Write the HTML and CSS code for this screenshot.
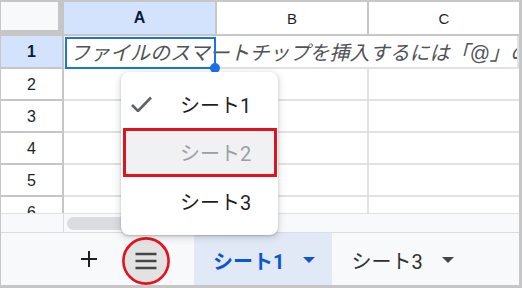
FILE: index.html
```html
<!DOCTYPE html>
<html lang="ja">
<head>
<meta charset="utf-8">
<link rel="stylesheet" href="styles.css">
</head>
<body>
<div class="frame">
  <div class="grid">
    <div class="corner"></div>
    <div class="colhead sel">A</div>
    <div class="colhead">B</div>
    <div class="colhead last">C</div>

    <div class="rowhead sel">1</div>
    <div class="cell span3"><span class="celltext">ファイルのスマートチップを挿入するには「@」の</span></div>

    <div class="rowhead">2</div><div class="cell"></div><div class="cell"></div><div class="cell last"></div>
    <div class="rowhead">3</div><div class="cell"></div><div class="cell"></div><div class="cell last"></div>
    <div class="rowhead">4</div><div class="cell"></div><div class="cell"></div><div class="cell last"></div>
    <div class="rowhead">5</div><div class="cell"></div><div class="cell"></div><div class="cell last"></div>
    <div class="rowhead">6</div><div class="cell"></div><div class="cell"></div><div class="cell last"></div>
  </div>

  <div class="scrollrow">
    <div class="scrollcorner"></div>
    <div class="scrolltrack"><div class="thumb"></div></div>
  </div>

  <div class="tabbar">
    <div class="iconbtn plus">
      <svg width="16" height="16" viewBox="0 0 16 16"><path d="M8 0v16M0 8h16" stroke="#1f1f1f" stroke-width="2"/></svg>
    </div>
    <div class="iconbtn menubtn">
      <svg width="48" height="48" viewBox="0 0 48 48">
        <circle cx="24" cy="24" r="22.6" fill="#e2e2e2" stroke="#e3131d" stroke-width="2.6"/>
        <path d="M13.5 17h21M13.5 24h21M13.5 31h21" stroke="#444746" stroke-width="2.4"/>
      </svg>
    </div>
    <div class="tab active"><span>シート1</span><i class="caret"></i></div>
    <div class="tab"><span>シート3</span><i class="caret"></i></div>
  </div>

  <div class="selection"><div class="handle"></div></div>

  <div class="popup">
    <div class="item">
      <span class="check">
        <svg width="21" height="16" viewBox="0 0 21 16"><path d="M1 9l6 6L20 1.5" fill="none" stroke="#5f6368" stroke-width="2.6"/></svg>
      </span>
      <span>シート1</span>
    </div>
    <div class="item disabled"><span class="check"></span><span>シート2</span></div>
    <div class="item"><span class="check"></span><span>シート3</span></div>
  </div>
</div>
</body>
</html>
```
FILE: styles.css
```css
html, body {
  margin: 0;
  padding: 0;
  background: #fff;
}
body {
  font-family: "Liberation Sans", "Noto Sans CJK JP", sans-serif;
}
.frame {
  position: relative;
  width: 522px;
  height: 288px;
  box-sizing: border-box;
  border-style: solid;
  border-color: #c6c6c6;
  border-width: 2px 3px 3px 1px;
  display: flex;
  flex-direction: column;
  overflow: hidden;
  background: #fff;
}
.grid {
  display: grid;
  grid-template-columns: 63px 153px 152px 150px;
  grid-template-rows: 34px 33px 32px 32px 32px 32px 32px;
  height: 211px;
  overflow: hidden;
  flex: none;
}
.grid > div {
  box-sizing: border-box;
}
.corner {
  background: #f8f9fa;
  border-right: 6px solid #c6c6c6;
  border-bottom: 6px solid #c6c6c6;
}
.colhead {
  display: flex;
  align-items: center;
  justify-content: center;
  font-size: 15px;
  color: #1f1f1f;
  border-right: 2px solid #c6c6c6;
  border-bottom: 2px solid #c6c6c6;
  background: #fff;
}
.colhead.last { border-right: none; }
.colhead.sel {
  background: #d3e3fd;
  font-weight: bold;
  color: #0a1a3a;
  font-size: 16px;
}
.rowhead {
  display: flex;
  align-items: center;
  justify-content: center;
  font-size: 16px;
  color: #1f1f1f;
  background: #fff;
  border-right: 2px solid #c6c6c6;
  border-bottom: 2px solid #c6c6c6;
  padding-top: 1px;
}
.rowhead.sel {
  background: #d3e3fd;
  font-weight: bold;
  color: #0a1a3a;
}
.cell {
  border-right: 2px solid #e2e2e2;
  border-bottom: 2px solid #e2e2e2;
}
.cell.last { border-right: none; }
.cell.span3 {
  grid-column: span 3;
  display: flex;
  align-items: center;
  padding-left: 6px;
  overflow: hidden;
}
.celltext {
  white-space: nowrap;
  font-style: italic;
  font-size: 20px;
  color: #505356;
}
.scrollrow {
  display: flex;
  height: 20px;
  flex: none;
  box-sizing: border-box;
  border-top: 1px solid #e2e2e2;
  border-bottom: 1px solid #dadce0;
  background: #f8f9fa;
}
.scrollcorner {
  width: 63px;
  box-sizing: border-box;
  border-right: 1px solid #dadce0;
}
.scrolltrack {
  flex: 1;
  padding: 3px 0 0 3px;
}
.thumb {
  width: 200px;
  height: 13px;
  border-radius: 7px;
  background: #dadce0;
}
.tabbar {
  flex: 1;
  display: flex;
  align-items: stretch;
  background: #f8f9fa;
  padding-left: 68px;
}
.iconbtn {
  display: flex;
  align-items: center;
  justify-content: center;
}
.plus {
  width: 40px;
}
.menubtn {
  width: 48px;
  margin-left: 13px;
  margin-right: 24px;
  padding-top: 3px;
}
.tab {
  display: flex;
  align-items: center;
  padding: 2px 17px 0 19px;
  font-family: "Roboto", "Noto Sans CJK JP", sans-serif;
  font-size: 20px;
  color: #2d2f31;
}
.tab span { margin-right: 19px; }
.tab.active {
  background: #e1e9f7;
  color: #0b57d0;
  font-weight: bold;
}
.caret {
  display: block;
  width: 0;
  height: 0;
  border-left: 6px solid transparent;
  border-right: 6px solid transparent;
  border-top: 6px solid #444746;
}
.tab.active .caret { border-top-color: #0b57d0; }
.selection {
  position: absolute;
  left: 64px;
  top: 35px;
  width: 151px;
  height: 32px;
  box-sizing: border-box;
  border: 2px solid #1a73e8;
  pointer-events: none;
}
.handle {
  position: absolute;
  right: -6px;
  bottom: -6px;
  width: 10px;
  height: 10px;
  border-radius: 50%;
  background: #1a73e8;
}
.popup {
  position: absolute;
  left: 120px;
  top: 70px;
  width: 157px;
  height: 163px;
  box-sizing: border-box;
  padding-top: 8px;
  background: #fff;
  border-radius: 8px;
  box-shadow: 0 2px 6px 2px rgba(60,64,67,0.15), 0 1px 2px rgba(60,64,67,0.3);
  font-family: "Roboto", "Noto Sans CJK JP", sans-serif;
  font-size: 20px;
  color: #1f1f1f;
}
.item {
  display: flex;
  align-items: center;
  height: 48px;
  box-sizing: border-box;
}
.check {
  width: 59px;
  padding-left: 10px;
  box-sizing: border-box;
  display: flex;
  align-items: center;
  flex: none;
}
.item.disabled {
  margin: 0 1px 0 2px;
  height: 49px;
  border: 3px solid #e3131d;
  background: #f0f1f3;
  color: #9aa0a6;
}
.item.disabled .check { width: 54px; }
```
